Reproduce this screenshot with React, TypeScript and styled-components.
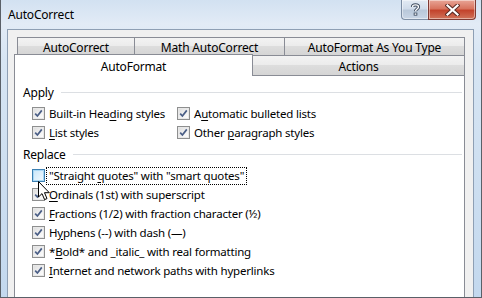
import React from 'react';
import styled, { createGlobalStyle } from 'styled-components';

const Global = createGlobalStyle`
  html, body { margin: 0; padding: 0; background: #fff; }
  body { width: 482px; height: 298px; overflow: hidden; font-family: "Noto Sans", "Segoe UI", sans-serif; font-size: 11.5px; letter-spacing: -0.2px; color: #000; }
`;

const Window = styled.div`
  position: relative;
  width: 482px;
  height: 298px;
  box-sizing: border-box;
  border: 1px solid #5a6068;
  border-top: none;
  background: linear-gradient(to bottom, #d2e1f1 0px, #e2ebf6 24px, #d7e5f3 60px, #c3d8ee 298px);
  display: flex;
  flex-direction: column;
  overflow: hidden;
`;

const TitleBar = styled.div`
  height: 29px;
  display: flex;
  align-items: flex-start;
  padding: 0 5px 0 7px;
`;

const Title = styled.div`
  flex: 1;
  line-height: 29px;
  font-size: 12px;
  color: #000;
`;

const CaptionGroup = styled.div`
  display: flex;
  height: 20px;
`;

const CaptionButton = styled.div<{ $kind: 'help' | 'close' }>`
  box-sizing: border-box;
  height: 20px;
  width: ${p => (p.$kind === 'help' ? '27px' : '48px')};
  border: 1px solid ${p => (p.$kind === 'help' ? '#7d8ea4' : '#7f3a33')};
  border-top: none;
  ${p => (p.$kind === 'help' ? 'border-right: none; border-bottom-left-radius: 4px;' : 'border-bottom-right-radius: 4px;')}
  background: ${p =>
    p.$kind === 'help'
      ? 'linear-gradient(to bottom, #e3ebf4 0%, #d1dcea 45%, #b9c8da 55%, #c9d6e6 100%)'
      : 'linear-gradient(to bottom, #e8a597 0%, #d8745f 45%, #c3432c 55%, #d0735a 100%)'};
  box-shadow: inset 0 0 0 1px rgba(255,255,255,0.45);
  display: flex;
  align-items: center;
  justify-content: center;
`;

const Body = styled.div`
  flex: 1;
  display: flex;
  padding: 0 7px 0 6px;
  min-height: 0;
`;

const Client = styled.div`
  flex: 1;
  border: 1px solid #8e9fb4;
  border-bottom: none;
  background: #f0f0f0;
  padding: 7px 8px 0 6px;
  display: flex;
  flex-direction: column;
  min-height: 0;
`;

const TabRow = styled.div<{ $indent?: number }>`
  display: flex;
  align-items: flex-end;
  margin-left: ${p => p.$indent ?? 0}px;
  height: ${p => (p.$indent ? 18 : 20)}px;
`;

const Tab = styled.div<{ $w: number; $selected?: boolean; $h?: number }>`
  box-sizing: border-box;
  width: ${p => p.$w}px;
  height: ${p => p.$h ?? 18}px;
  border: 1px solid #898c95;
  border-left-width: 0;
  &:first-child { border-left-width: 1px; }
  ${p =>
    p.$selected
      ? `background: #fff; border-bottom: none; margin-bottom: -1px; height: 22px; position: relative; z-index: 2;`
      : `background: linear-gradient(to bottom, #f3f3f3 0%, #ebebeb 50%, #dddddd 50%, #d5d5d5 100%); border-bottom: none;`}
  display: flex;
  align-items: center;
  justify-content: center;
  font-size: 12px;
  white-space: nowrap;
  padding-top: 2px;
`;

const Panel = styled.div`
  flex: 1;
  background: #fff;
  border: 1px solid #898c95;
  border-bottom: none;
  padding: 8px 2px 0 8px;
  display: flex;
  flex-direction: column;
`;

const GroupHeader = styled.div<{ $mt?: number }>`
  display: flex;
  align-items: center;
  height: 16px;
  margin-top: ${p => p.$mt ?? 0}px;
  font-size: 12px;
`;

const Rule = styled.div`
  flex: 1;
  height: 1px;
  background: #dcdfe3;
  margin-left: 7px;
`;

const List = styled.div<{ $cols?: boolean }>`
  margin-top: 4px;
  padding-left: 9px;
  display: grid;
  grid-template-columns: ${p => (p.$cols ? '145px auto' : 'auto')};
  justify-content: start;
`;

const Row = styled.div`
  height: 19px;
  display: flex;
  align-items: center;
  white-space: nowrap;
`;

const Box = styled.span<{ $hover?: boolean }>`
  box-sizing: border-box;
  width: 13px;
  height: 13px;
  flex: none;
  border: 1px solid ${p => (p.$hover ? '#3c7fb1' : '#8e8f8f')};
  background: ${p =>
    p.$hover
      ? 'linear-gradient(135deg, #c9e6f9 0%, #e2f2fc 60%, #f4fafe 100%)'
      : 'linear-gradient(135deg, #dcdcdc 0%, #f3f3f3 60%, #ffffff 100%)'};
  box-shadow: inset 0 0 0 1px ${p => (p.$hover ? '#a9d8f5' : '#e8e8e8')};
  display: flex;
  align-items: center;
  justify-content: center;
`;

const Label = styled.span<{ $focus?: boolean }>`
  display: inline-block;
  line-height: 16px;
  padding: 0 2px;
  border: 1px dotted ${p => (p.$focus ? '#000' : 'transparent')};
  margin-left: 1px;
  margin-top: 1px;
`;

const Key = styled.span`
  text-decoration: underline;
  text-underline-offset: 2px;
`;

const Cursor = styled.svg`
  position: absolute;
  left: 37px;
  top: 181px;
  z-index: 5;
`;

const Check = () => (
  <svg width="9" height="9" viewBox="0 0 9 9">
    <path d="M1.2 4.6 L3.4 7 L7.8 1.4" fill="none" stroke="#4a5e86" strokeWidth="1.7" strokeLinejoin="miter" />
  </svg>
);

const CheckRow = ({ pre = '', k = '', post = '', checked = true, hover = false, focus = false }: { pre?: string; k?: string; post?: string; checked?: boolean; hover?: boolean; focus?: boolean }) => (
  <Row>
    <Box $hover={hover}>{checked && <Check />}</Box>
    <Label $focus={focus}>
      {pre}
      {k && <Key>{k}</Key>}
      {post}
    </Label>
  </Row>
);

export default function App() {
  return (
    <>
      <Global />
      <Window>
        <TitleBar>
          <Title>AutoCorrect</Title>
          <CaptionGroup>
            <CaptionButton $kind="help">
              <svg width="11" height="13" viewBox="0 0 11 13">
                <path d="M2.5 4 C2.5 1.2 8.5 1.2 8.5 4 C8.5 6 5.5 6 5.5 8.3" fill="none" stroke="#3e4c60" strokeWidth="3.2" />
                <path d="M2.5 4 C2.5 1.2 8.5 1.2 8.5 4 C8.5 6 5.5 6 5.5 8.3" fill="none" stroke="#fff" strokeWidth="1.4" />
                <rect x="3.7" y="9.6" width="3.6" height="3" fill="#3e4c60" />
                <rect x="4.6" y="10.4" width="1.8" height="1.4" fill="#fff" />
              </svg>
            </CaptionButton>
            <CaptionButton $kind="close">
              <svg width="15" height="12" viewBox="0 0 15 12">
                <path d="M2.5 1.5 L12.5 10.5 M12.5 1.5 L2.5 10.5" stroke="#5a2a24" strokeWidth="4.2" strokeLinecap="square" />
                <path d="M2.5 1.5 L12.5 10.5 M12.5 1.5 L2.5 10.5" stroke="#fff" strokeWidth="2.2" strokeLinecap="square" />
              </svg>
            </CaptionButton>
          </CaptionGroup>
        </TitleBar>
        <Body>
          <Client>
            <TabRow $indent={3}>
              <Tab $w={118}>AutoCorrect</Tab>
              <Tab $w={150}>Math AutoCorrect</Tab>
              <Tab $w={180}>AutoFormat As You Type</Tab>
            </TabRow>
            <TabRow>
              <Tab $w={239} $selected>AutoFormat</Tab>
              <Tab $w={212} $h={20}>Actions</Tab>
            </TabRow>
            <Panel>
              <GroupHeader>
                Apply
                <Rule />
              </GroupHeader>
              <List $cols>
                <CheckRow pre="Built-in Hea" k="d" post="ing styles" />
                <CheckRow pre="A" k="u" post="tomatic bulleted lists" />
                <CheckRow k="L" post="ist styles" />
                <CheckRow pre="Other " k="p" post="aragraph styles" />
              </List>
              <GroupHeader $mt={4}>
                Replace
                <Rule />
              </GroupHeader>
              <List>
                <CheckRow pre={'"Straight '} k="q" post={'uotes" with "smart quotes"'} checked={false} hover focus />
                <CheckRow k="O" post="rdinals (1st) with superscript" />
                <CheckRow k="F" post="ractions (1/2) with fraction character (½)" />
                <CheckRow pre="H" k="y" post="phens (--) with dash (—)" />
                <CheckRow pre="*" k="B" post="old* and _italic_ with real formatting" />
                <CheckRow k="I" post="nternet and network paths with hyperlinks" />
              </List>
            </Panel>
          </Client>
        </Body>
        <Cursor width="13" height="20" viewBox="0 0 13 20">
          <path d="M0.5 0.5 L0.5 16 L4 12.6 L6.6 18.6 L9 17.6 L6.5 11.7 L11.3 11.7 Z" fill="#fff" stroke="#000" strokeWidth="1" strokeLinejoin="miter" />
        </Cursor>
      </Window>
    </>
  );
}
